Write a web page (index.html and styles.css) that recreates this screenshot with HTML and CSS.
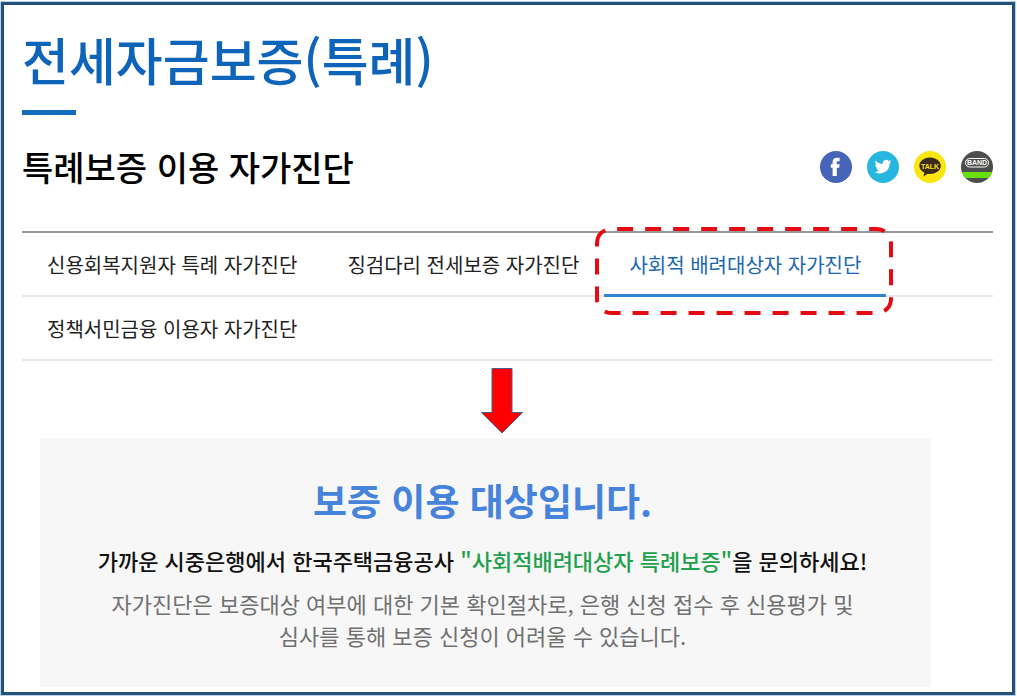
FILE: index.html
```html
<!DOCTYPE html>
<html lang="ko">
<head>
<meta charset="utf-8">
<meta name="viewport" content="width=device-width, initial-scale=1">
<title>전세자금보증(특례)</title>
<link rel="stylesheet" href="styles.css">
</head>
<body>
<main class="frame">
  <h1 class="title">전세자금보증(특례)</h1>
  <div class="subhead">
    <h2 class="subtitle">특례보증 이용 자가진단</h2>
    <div class="share">
      <a href="#facebook" aria-label="Facebook">
        <svg class="icon" viewBox="0 0 32 32"><circle cx="16" cy="16" r="16" fill="#4664b8"/><path fill="#fff" d="M12.600 25v-8.200H10.800v-3.600h1.800v-2.200c0-2.800 1.700-4.300 4.400-4.300h2.600v3.500h-1.500c-1.100 0-1.300.5-1.300 1.300v1.700h2.800l-.4 3.600h-2.400V25z"/></svg>
      </a>
      <a href="#twitter" aria-label="Twitter">
        <svg class="icon" viewBox="0 0 32 32"><circle cx="16" cy="16" r="16" fill="#26b6df"/><path fill="#fff" d="M24.500 10.400c-.6.300-1.300.5-2 .6.700-.4 1.200-1.100 1.500-1.900-.7.400-1.400.7-2.200.8a3.500 3.500 0 0 0-6 3.200c-2.900-.1-5.400-1.500-7.100-3.600-.9 1.600-.5 3.600 1.100 4.600-.6 0-1.100-.2-1.600-.4 0 1.700 1.200 3.100 2.800 3.400-.5.100-1 .2-1.600.1.400 1.400 1.700 2.400 3.200 2.400A7 7 0 0 1 7.500 21c4.900 3.200 15.200 1.200 15.200-8.800.7-.5 1.300-1.100 1.800-1.800z"/></svg>
      </a>
      <a href="#kakaotalk" aria-label="KakaoTalk">
        <svg class="icon" viewBox="0 0 32 32"><circle cx="16" cy="16" r="16" fill="#fae50c"/><path fill="#3b2a20" d="M16 6.500c6.100 0 10.800 3.700 10.800 8.300S22.100 23 16 23c-.8 0-1.600-.1-2.300-.2L9.500 25.500l.8-4C7.300 20.200 5.300 17.700 5.300 14.800c0-4.600 4.600-8.300 10.700-8.300z"/><text class="talk" x="16" y="17.500" text-anchor="middle">TALK</text></svg>
      </a>
      <a href="#band" aria-label="Band">
        <svg class="icon" viewBox="0 0 32 32"><circle cx="16" cy="16" r="16" fill="#4d4d4d"/><path fill="#68e010" d="M.8 21h30.400a16 16 0 0 1-3.300 6H4.100A16 16 0 0 1 .8 21z"/><rect x="4.500" y="7.500" width="23" height="8.500" rx="4.200" fill="none" stroke="#fff" stroke-width="1"/><text class="band" x="16" y="14.200" text-anchor="middle">BAND</text></svg>
      </a>
    </div>
  </div>
  <nav>
    <ul class="tabs">
      <li><a class="tab" href="#credit">신용회복지원자 특례 자가진단</a></li>
      <li><a class="tab" href="#bridge">징검다리 전세보증 자가진단</a></li>
      <li class="marked">
        <a class="tab active" href="#social" aria-current="page">사회적 배려대상자 자가진단</a>
        <svg class="marker" viewBox="0 0 300 90" aria-hidden="true"><path d="M3 17a14 14 0 0 1 14-14H283a14 14 0 0 1 14 14V73a14 14 0 0 1-14 14H17a14 14 0 0 1-14-14Z"/></svg>
      </li>
      <li><a class="tab" href="#policy">정책서민금융 이용자 자가진단</a></li>
    </ul>
  </nav>
  <svg class="arrow" viewBox="0 0 44 66" aria-hidden="true"><path d="M12 .5H32V44.500H42.500L22 65 1.500 44.500H12Z" fill="#f00" stroke="#44608c"/></svg>
  <section class="result">
    <h3 class="verdict">보증 이용 대상입니다.</h3>
    <p class="guide">가까운 시중은행에서 한국주택금융공사 <em class="product">"사회적배려대상자 특례보증"</em>을 문의하세요!</p>
    <p class="note">자가진단은 보증대상 여부에 대한 기본 확인절차로, 은행 신청 접수 후 신용평가 및 심사를 통해 보증 신청이 어려울 수 있습니다.</p>
  </section>
</main>
</body>
</html>
```
FILE: styles.css
```css
* { box-sizing: border-box; }

body {
  margin: 0;
  padding: 2px 2px 2px 1px;
  background: #fff;
  color: #222;
  font-family: "Noto Sans CJK KR", sans-serif;
}

h1, h2, h3, p, ul { margin: 0; padding: 0; }

.frame {
  display: flex;
  flex-direction: column;
  padding: 22px 19px 5px 18px;
  border: 3px solid #24507c;
  box-shadow: 0 0 0 1px #bcd2e6;
}

.title {
  color: #0d64b8;
  font-size: 51px;
  font-weight: 500;
  line-height: 64px;
}

.title::after {
  content: "";
  display: block;
  width: 54px;
  height: 5px;
  margin-top: 19px;
  background: #146cbc;
}

.subhead {
  display: flex;
  justify-content: space-between;
  align-items: center;
  margin: 28px 0 40px;
}

.subtitle {
  color: #000;
  font-size: 34px;
  font-weight: 500;
  line-height: 48px;
}

.share { display: flex; gap: 15px; }
.share a { display: block; height: 32px; }
.icon { display: block; width: 32px; height: 32px; }

.talk, .band {
  font-family: "Liberation Sans", sans-serif;
  font-weight: 700;
}
.talk { font-size: 7px; fill: #fae50c; }
.band { font-size: 7px; fill: #fff; }

.tabs {
  display: flex;
  flex-wrap: wrap;
  list-style: none;
  border-top: 2px solid #999;
  background: repeating-linear-gradient(#fff 0 62px, #e8e8e8 62px 64px);
}

.tab {
  display: block;
  height: 64px;
  padding: 0 25px;
  color: #222;
  font-size: 20px;
  line-height: 64px;
  text-decoration: none;
}

.tab.active {
  color: #1b68b0;
  border-bottom: 3px solid #2e86d0;
}

.marked { position: relative; }

.marker {
  position: absolute;
  top: -7px;
  left: -10px;
  width: 300px;
  height: 90px;
  pointer-events: none;
}

.marker path {
  fill: none;
  stroke: #e60a12;
  stroke-width: 4;
  stroke-dasharray: 16 12;
}

.arrow {
  align-self: center;
  width: 44px;
  height: 66px;
  margin: 7px 12px 4px 0;
}

.result {
  margin: 0 62px 0 18px;
  padding: 34px 52px 36px 46px;
  background: #f7f7f7;
  text-align: center;
}

.verdict {
  color: #4684dc;
  font-size: 37px;
  font-weight: 700;
  line-height: 56px;
}

.guide {
  margin-top: 15px;
  color: #111;
  font-size: 22px;
  font-weight: 500;
  line-height: 34px;
}

.product { color: #1fa04c; font-style: normal; }

.note {
  margin-top: 10px;
  padding: 0 8px;
  color: #707070;
  font-size: 22px;
  font-weight: 400;
  line-height: 32px;
  word-break: keep-all;
}
```
